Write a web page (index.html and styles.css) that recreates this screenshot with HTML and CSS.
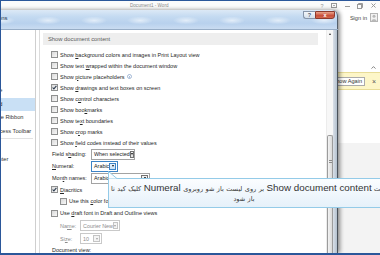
FILE: index.html
```html
<!DOCTYPE html>
<html lang="en">

<head>
  <meta charset="UTF-8" />
  <meta name="viewport" content="width=device-width, initial-scale=1.0" />
  <title>Word Options - Advanced</title>
  <link rel="stylesheet" href="styles.css">
</head>

<body>
  <div class="word">
    <div class="titlebar">
      <span class="doc-title">Document1 - Word</span>
      <div class="win-buttons">
        <span class="wb wb-help">?</span>
        <span class="wb"><svg width="6" height="5" viewBox="0 0 6 5"><rect x="0.5" y="0.5" width="5" height="4" fill="none" stroke="#999" /><path d="M2 3 L3 2 L4 3" fill="none" stroke="#999" stroke-width="0.8" /></svg></span>
        <span class="wb"><svg width="5" height="5" viewBox="0 0 5 5"><line x1="0" y1="3.5" x2="5" y2="3.5" stroke="#999" /></svg></span>
        <span class="wb"><svg width="6" height="6" viewBox="0 0 6 6"><rect x="0.5" y="1.5" width="4" height="4" fill="none" stroke="#999" /><path d="M1.5 1.5 V0.5 H5.5 V4.5 H4.5" fill="none" stroke="#999" /></svg></span>
        <span class="wb"><svg width="5" height="5" viewBox="0 0 5 5"><path d="M0.5 0.5 L4.5 4.5 M4.5 0.5 L0.5 4.5" stroke="#999" /></svg></span>
      </div>
    </div>

    <div class="main">
      <div class="dialog">
        <div class="dlg-title">
          <span class="dlg-caption">Word Options</span>
          <div class="dlg-buttons">
            <span class="help-btn">?</span>
            <span class="close-btn">x</span>
          </div>
        </div>

        <div class="dlg-body">
          <ul class="nav">
            <li>General</li>
            <li>Display</li>
            <li>Proofing</li>
            <li>Save</li>
            <li>Language</li>
            <li class="active">Advanced</li>
            <li>Customize Ribbon</li>
            <li>Quick Access Toolbar</li>
            <li class="sep"></li>
            <li>Add-Ins</li>
            <li>Trust Center</li>
          </ul>

          <div class="content">
            <div class="section-head">Show document content</div>

            <div class="options">
              <div class="opt"><span class="cb"></span><span>Show <u>b</u>ackground colors and images in Print Layout view</span></div>
              <div class="opt"><span class="cb"></span><span>Show text <u>w</u>rapped within the document window</span></div>
              <div class="opt"><span class="cb"></span><span>Show <u>p</u>icture placeholders</span><svg class="info" width="5" height="5" viewBox="0 0 5 5"><circle cx="2.5" cy="2.5" r="2" fill="none" stroke="#7d9cc4" stroke-width="0.7" /><line x1="2.5" y1="2" x2="2.5" y2="3.8" stroke="#7d9cc4" stroke-width="0.7" /></svg></div>
              <div class="opt"><span class="cb"><svg width="5" height="5" viewBox="0 0 5 5"><path d="M0.6 2.5 L1.9 3.9 L4.4 0.8" fill="none" stroke="#2e3d50" stroke-width="1.1" /></svg></span><span>Show <u>d</u>rawings and text boxes on screen</span></div>
              <div class="opt"><span class="cb"></span><span>Show c<u>o</u>ntrol characters</span></div>
              <div class="opt"><span class="cb"></span><span>Show boo<u>k</u>marks</span></div>
              <div class="opt"><span class="cb"></span><span>Show te<u>x</u>t boundaries</span></div>
              <div class="opt"><span class="cb"></span><span>Show c<u>r</u>op marks</span></div>
              <div class="opt"><span class="cb"></span><span>Show <u>f</u>ield codes instead of their values</span></div>

              <div class="field">
                <span class="label">Field s<u>h</u>ading:</span>
                <span class="select sel-shading"><span>When selected</span><span class="arrow"></span></span>
              </div>
              <div class="field">
                <span class="label"><u>N</u>umeral:</span>
                <span class="select sel-numeral focused"><span>Arabic</span><span class="arrow"></span></span>
              </div>
              <div class="field">
                <span class="label">Mon<u>t</u>h names:</span>
                <span class="select sel-month"><span>Arabic</span><span class="arrow"></span></span>
              </div>

              <div class="opt"><span class="cb"><svg width="5" height="5" viewBox="0 0 5 5"><path d="M0.6 2.5 L1.9 3.9 L4.4 0.8" fill="none" stroke="#2e3d50" stroke-width="1.1" /></svg></span><span><u>D</u>iacritics</span></div>
              <div class="opt opt-sub"><span class="cb"></span><span>Use this <u>c</u>olor for diacritics:</span></div>
              <div class="opt opt-draft"><span class="cb"></span><span>Use <u>d</u>raft font in Draft and Outline views</span></div>

              <div class="field field-sub">
                <span class="label">Na<u>m</u>e:</span>
                <span class="select sel-name disabled"><span>Courier New</span><span class="arrow"></span></span>
              </div>
              <div class="field field-sub">
                <span class="label">Si<u>z</u>e:</span>
                <span class="select sel-size disabled"><span>10</span><span class="arrow"></span></span>
              </div>

              <div class="group-label">Document view:</div>
            </div>
          </div>

          <div class="scrollbar">
            <div class="sb-up"></div>
            <div class="thumb"><span class="grip"></span></div>
          </div>
          <div class="frame"></div>
        </div>
      </div>

      <div class="side">
        <div class="signin">
          <span>Sign in</span>
          <span class="avatar"><svg width="6" height="7" viewBox="0 0 6 7"><circle cx="3" cy="2.2" r="1.5" fill="#b9b9b9" /><path d="M0.5 7 C0.5 4.6 5.5 4.6 5.5 7 Z" fill="#b9b9b9" /></svg></span>
        </div>
        <div class="collapse"><svg width="5" height="3" viewBox="0 0 5 3"><path d="M0.5 2.6 L2.5 0.6 L4.5 2.6" fill="none" stroke="#666" stroke-width="0.8" /></svg></div>
        <div class="msgbar">
          <span class="msg-btn"><span>Show Again</span></span>
          <span class="msg-close">×</span>
        </div>
        <div class="page-white"></div>
        <div class="page-gray"></div>
      </div>
    </div>

    <div class="tooltip">
      <svg class="notch" width="10" height="8" viewBox="0 0 10 8"><polygon points="0.5,0.5 0.5,8 9.5,8" fill="#fbfdff" stroke="#94cbe8" /></svg>
      <div class="tip-line"><span dir="rtl">در قسمت <span class="lat">Show document content</span> بر روی لیست باز شو روبروی <span class="lat">Numeral</span> کلیک کید تا</span></div>
      <div class="tip-line tip-line2" dir="rtl">باز شود</div>
    </div>
  </div>
</body>

</html>
```

FILE: styles.css
```css
* {
  box-sizing: border-box;
}

body {
  margin: 0;
  font-family: "Liberation Sans", Arial, sans-serif;
  background: #fff;
}

u {
  text-decoration-thickness: 0.5px;
  text-underline-offset: 0.5px;
}

.word {
  position: relative;
  width: 380px;
  height: 255px;
  border: 1px solid #2b579a;
  border-right: none;
  border-bottom-width: 2px;
  overflow: hidden;
  display: flex;
  flex-direction: column;
  background: #fff;
}

/* word title bar */
.titlebar {
  height: 9px;
  flex-shrink: 0;
  display: flex;
  align-items: center;
  background: #fbfbfb;
}

.doc-title {
  padding-left: 129px;
  font-size: 4.6px;
  color: #8a8a8a;
}

.win-buttons {
  margin-left: auto;
  display: flex;
}

.wb {
  width: 12px;
  height: 9px;
  display: flex;
  align-items: center;
  justify-content: center;
}

.wb:nth-child(3),
.wb:nth-child(5) {
  width: 14px;
}

.wb-help {
  font-size: 5.5px;
  color: #999;
}

.main {
  flex: 1;
  display: flex;
  min-height: 0;
}

/* options dialog */
.dialog {
  position: relative;
  z-index: 1;
  margin-left: -30px;
  width: 367px;
  flex-shrink: 0;
  display: flex;
  flex-direction: column;
  box-shadow: 2px 0 4px rgba(0, 0, 0, 0.45);
  border-top-right-radius: 6px;
}

.dlg-title {
  height: 19px;
  flex-shrink: 0;
  display: flex;
  align-items: flex-start;
  border-top-right-radius: 6px;
  border-right: 1px solid #55606c;
  background:
    radial-gradient(ellipse 13px 4px at 50% 55%, rgba(240, 246, 252, 0.75), rgba(240, 246, 252, 0)) 8px 0 / 46px 19px repeat-x,
    linear-gradient(to bottom, #dce9f6 0%, #c4daf1 35%, #b8d1ed 70%, #cadcf1 100%);
}

.dlg-caption {
  font-size: 6px;
  line-height: 17px;
  color: #1e3552;
  white-space: nowrap;
}

.dlg-buttons {
  margin-left: auto;
  margin-right: 2px;
  margin-top: 1px;
  display: flex;
}

.help-btn,
.close-btn {
  height: 8px;
  display: flex;
  align-items: center;
  justify-content: center;
  font-size: 5.5px;
  font-weight: bold;
}

.help-btn {
  width: 12px;
  color: #4a5a6e;
  background: linear-gradient(#f3f7fb, #d3dfeb);
  border: 1px solid #8796aa;
  border-right: none;
  border-bottom-left-radius: 3px;
}

.close-btn {
  width: 20px;
  color: #fff;
  background: linear-gradient(#eaa48c, #c9503a 60%, #d0684f);
  border: 1px solid #8c3b2e;
  border-bottom-right-radius: 3px;
}

.dlg-body {
  flex: 1;
  display: flex;
  border-top: 1px solid #97adc6;
  background: #fff;
  min-height: 0;
}

.nav {
  width: 65px;
  flex-shrink: 0;
  margin: 0;
  padding: 0;
  list-style: none;
  border-right: 1px solid #cfcfcf;
  font-size: 5.7px;
  color: #333;
}

.nav li {
  height: 13.5px;
  line-height: 13.5px;
  padding-left: 6px;
  white-space: nowrap;
}

.nav li.active {
  background: #c9e0f5;
}

.nav li.sep {
  height: 1px;
  margin-right: 2px;
  background: #e2e2e2;
}

.content {
  width: 287px;
  flex-shrink: 0;
  margin-left: 3px;
  border-left: 1px solid #dcdcdc;
  padding: 3px 8px 0 3px;
  font-size: 5.5px;
  color: #262626;
}

.section-head {
  height: 12px;
  line-height: 12px;
  padding-left: 5px;
  background: #eeeeee;
  font-size: 5.8px;
  color: #595959;
}

.options {
  margin-top: 4px;
}

.opt {
  height: 11px;
  display: flex;
  align-items: center;
  padding-left: 8px;
  white-space: nowrap;
}

.opt-sub {
  height: 12px;
  padding-left: 17px;
}

.opt-draft {
  height: 12px;
}

.cb {
  width: 7px;
  height: 7px;
  margin-right: 2px;
  flex-shrink: 0;
  display: flex;
  align-items: center;
  justify-content: center;
  border: 1px solid #8f9090;
  background: linear-gradient(135deg, #d9d9d9, #f8f8f8);
}

.info {
  margin-left: 2px;
}

.field {
  height: 12px;
  display: flex;
  align-items: center;
  padding-left: 9px;
  white-space: nowrap;
}

.field .label {
  width: 39px;
}

.field-sub {
  height: 13px;
  padding-left: 17px;
  color: #8c8c8c;
}

.field-sub .label {
  width: 20px;
}

.select {
  height: 11px;
  display: flex;
  align-items: center;
  padding-left: 2px;
  border: 1px solid #a3a3a3;
  background: #fff;
  font-size: 5.4px;
  color: #222;
}

.arrow {
  margin-left: auto;
  margin-right: 1px;
  width: 7px;
  height: 7px;
  display: flex;
  align-items: center;
  justify-content: center;
  border: 1px solid #727272;
  background: linear-gradient(#f4f4f4, #dedede);
}

.arrow::after {
  content: "";
  border-left: 1.5px solid transparent;
  border-right: 1.5px solid transparent;
  border-top: 2px solid #111;
}

.sel-shading {
  width: 44px;
}

.sel-numeral {
  width: 27px;
}

.sel-month {
  width: 59px;
}

.sel-name {
  width: 40px;
}

.sel-size {
  width: 22px;
}

.select.focused {
  border-color: #3d84c6;
}

.select.focused .arrow {
  border-color: #3d84c6;
  background: linear-gradient(#e8f3fd, #c7e1f8);
}

.select.disabled {
  border-color: #c9c9c9;
  color: #8d8d8d;
}

.select.disabled .arrow {
  border-color: #c4c4c4;
  background: #f4f4f4;
}

.select.disabled .arrow::after {
  border-top-color: #a0a0a0;
}

.group-label {
  height: 11px;
  line-height: 11px;
  padding-left: 9px;
}

.scrollbar {
  width: 7px;
  flex-shrink: 0;
  display: flex;
  flex-direction: column;
  background: #f7f7f7;
  border-left: 1px solid #ececec;
}

.sb-up {
  height: 7px;
  display: flex;
  align-items: center;
  justify-content: center;
}

.sb-up::after {
  content: "";
  border-left: 1.5px solid transparent;
  border-right: 1.5px solid transparent;
  border-bottom: 2px solid #333;
}

.thumb {
  flex: 1;
  margin-top: 98px;
  padding-top: 24px;
  display: flex;
  justify-content: center;
  border: 1px solid #9c9c9c;
  border-bottom: none;
  border-radius: 2px 2px 0 0;
  background: linear-gradient(to right, #f3f3f3, #dadada);
}

.grip {
  width: 3px;
  height: 3px;
  border-top: 1px solid #8a8a8a;
  border-bottom: 1px solid #8a8a8a;
}

.frame {
  width: 5px;
  flex-shrink: 0;
  border-right: 1px solid #4a525b;
  background: linear-gradient(to right, #d9e0e8, #b3c0ce);
}

/* word window behind the dialog */
.side {
  flex: 1;
  display: flex;
  flex-direction: column;
  background: #fff;
  font-size: 5.6px;
  color: #444;
}

.signin {
  margin-top: 3px;
  height: 9px;
  display: flex;
  align-items: center;
  justify-content: flex-end;
  padding-right: 2px;
}

.avatar {
  width: 8px;
  height: 9px;
  margin-left: 3px;
  display: flex;
  align-items: flex-end;
  justify-content: center;
  border: 1px solid #b5b5b5;
  background: #f3f3f3;
}

.collapse {
  margin-top: 42px;
  height: 6px;
  display: flex;
  align-items: center;
  justify-content: flex-end;
  padding-right: 4px;
}

.msgbar {
  margin-top: 2px;
  height: 18px;
  display: flex;
  align-items: center;
  background: #fdf6c8;
  border-top: 1px solid #e8dc98;
  border-bottom: 1px solid #e8dc98;
}

.msg-btn {
  width: 27px;
  height: 9px;
  display: flex;
  align-items: center;
  justify-content: flex-end;
  padding-right: 2px;
  overflow: hidden;
  white-space: nowrap;
  background: #fff;
  border: 1px solid #ababab;
  border-left: none;
  color: #333;
}

.msg-close {
  margin-left: auto;
  margin-right: 4px;
  font-size: 7px;
  color: #555;
}

.page-white {
  height: 53px;
}

.page-gray {
  flex: 1;
  background: #f3f3f3;
}

/* callout */
.tooltip {
  position: absolute;
  z-index: 5;
  left: 107px;
  top: 177px;
  width: 278px;
  height: 30px;
  padding-top: 3px;
  border: 1px solid #94cbe8;
  background: linear-gradient(#fbfdff, #e6f1fa);
  font-family: "DejaVu Sans", sans-serif;
  font-size: 6.5px;
  word-spacing: 0.4px;
  color: #3a3a3a;
}

.notch {
  position: absolute;
  left: -1px;
  top: -8px;
}

.tip-line {
  height: 11.5px;
  line-height: 11.5px;
  padding-left: 2px;
  white-space: nowrap;
}

.tip-line2 {
  padding: 0 6px 0 0;
  text-align: center;
}

.tip-line .lat {
  font-family: "Liberation Sans", Arial, sans-serif;
  font-size: 9.8px;
  word-spacing: 0;
  color: #333;
}
```
